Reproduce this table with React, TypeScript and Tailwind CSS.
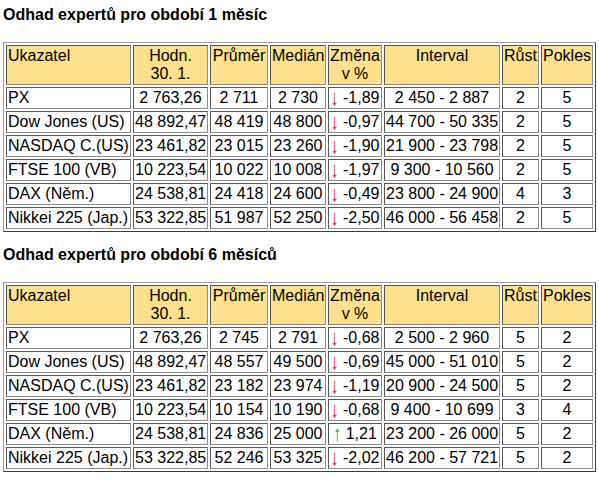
const headers = [
    {label: ['Ukazatel'], w: 'w-[125px]', align: 'text-left'},
    {label: ['Hodn.', '30. 1.'], w: 'w-[75px]', align: 'text-center'},
    {label: ['Průměr'], w: 'w-[58px]', align: 'text-center'},
    {label: ['Medián'], w: 'w-[56px]', align: 'text-center'},
    {label: ['Změna', 'v %'], w: 'w-[54px]', align: 'text-center'},
    {label: ['Interval'], w: 'w-[116px]', align: 'text-center'},
    {label: ['Růst'], w: 'w-[37px]', align: 'text-center'},
    {label: ['Pokles'], w: 'w-[52px]', align: 'text-center'},
];

type Row = [string, string, string, string, string, string, string, string];

const month: Row[] = [
    ['PX', '2 763,26', '2 711', '2 730', '-1,89', '2 450 - 2 887', '2', '5'],
    ['Dow Jones (US)', '48 892,47', '48 419', '48 800', '-0,97', '44 700 - 50 335', '2', '5'],
    ['NASDAQ C.(US)', '23 461,82', '23 015', '23 260', '-1,90', '21 900 - 23 798', '2', '5'],
    ['FTSE 100 (VB)', '10 223,54', '10 022', '10 008', '-1,97', '9 300 - 10 560', '2', '5'],
    ['DAX (Něm.)', '24 538,81', '24 418', '24 600', '-0,49', '23 800 - 24 900', '4', '3'],
    ['Nikkei 225 (Jap.)', '53 322,85', '51 987', '52 250', '-2,50', '46 000 - 56 458', '2', '5'],
];

const halfYear: Row[] = [
    ['PX', '2 763,26', '2 745', '2 791', '-0,68', '2 500 - 2 960', '5', '2'],
    ['Dow Jones (US)', '48 892,47', '48 557', '49 500', '-0,69', '45 000 - 51 010', '5', '2'],
    ['NASDAQ C.(US)', '23 461,82', '23 182', '23 974', '-1,19', '20 900 - 24 500', '5', '2'],
    ['FTSE 100 (VB)', '10 223,54', '10 154', '10 190', '-0,68', '9 400 - 10 699', '3', '4'],
    ['DAX (Něm.)', '24 538,81', '24 836', '25 000', '1,21', '23 200 - 26 000', '5', '2'],
    ['Nikkei 225 (Jap.)', '53 322,85', '52 246', '53 325', '-2,02', '46 200 - 57 721', '5', '2'],
];

const cell = "border border-solid border-t-[#555] border-l-[#555] border-b-[#8c8c8c] border-r-[#8c8c8c] p-[1px]";

function Change({value}: {value: string}) {
    const up = !value.startsWith('-');
    return (
        <>
            <span className={`inline-block scale-y-[1.4] ${up ? "text-[#1d9a5c]" : "text-[#e8103a]"}`}>
                {up ? '↑' : '↓'}
            </span> {value}
        </>
    );
}

function ExpertTable({title, rows}: {title: string; rows: Row[]}) {
    return (
        <div>
            <div className="font-bold ml-[3px] mb-[18px]">{title}</div>
            <table className="table-fixed w-[593px] ml-[3px] border-separate border-spacing-[2px] border border-solid border-t-[#9a9a9a] border-l-[#9a9a9a] border-b-[#3c3c3c] border-r-[#3c3c3c]">
                <thead>
                    <tr>
                        {headers.map((h, i) => (
                            <th key={i} className={`${cell} ${h.w} ${h.align} align-top font-normal bg-[#fde18c]`}>
                                {h.label.map((l, j) => <div key={j}>{l}</div>)}
                            </th>
                        ))}
                    </tr>
                </thead>
                <tbody>
                    {rows.map((r, i) => (
                        <tr key={i}>
                            {r.map((v, j) => (
                                <td key={j} className={`${cell} bg-white whitespace-nowrap ${j === 0 ? 'text-left' : 'text-center'}`}>
                                    {j === 4 ? <Change value={v} /> : v}
                                </td>
                            ))}
                        </tr>
                    ))}
                </tbody>
            </table>
        </div>
    );
}

export default function App() {
    return (
        <div className="bg-white w-[599px] h-[480px] pt-[6px] text-black text-[16px] leading-[18px] font-['Liberation_Sans',Arial,sans-serif]">
            <ExpertTable title="Odhad expertů pro období 1 měsíc" rows={month} />
            <div className="h-[14px]" />
            <ExpertTable title="Odhad expertů pro období 6 měsíců" rows={halfYear} />
        </div>
    );
}
